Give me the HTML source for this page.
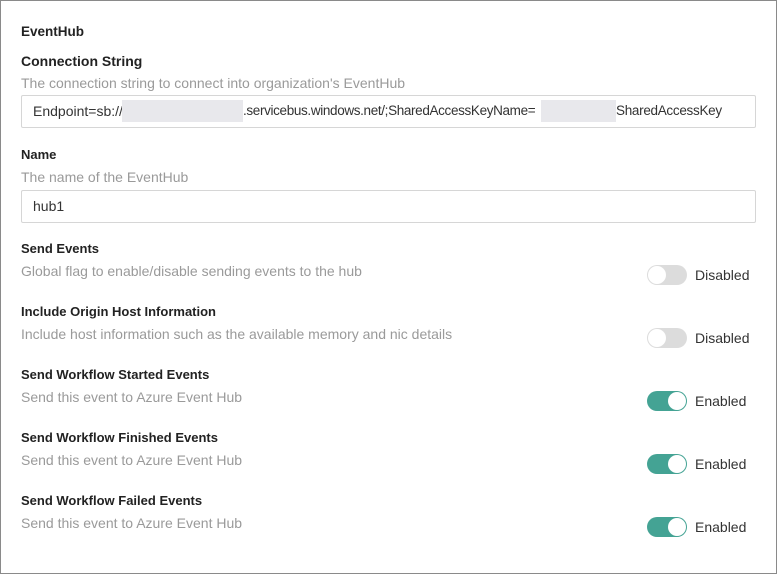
<!DOCTYPE html>
<html><head><style>
body{margin:0;width:777px;height:574px;overflow:hidden;background:#fff;font-family:"Liberation Sans",sans-serif;}
.frame{position:absolute;left:0;top:0;width:775px;height:572px;border:1px solid #8a8a8a;}
.a{position:absolute;white-space:nowrap;}
.h{font-weight:bold;font-size:13px;color:#222;}
.d{font-size:14px;color:#9a9a9a;}
.inp{position:absolute;left:21px;width:733px;height:31px;border:1px solid #d6d6d6;border-radius:2px;font-size:14px;color:#333;line-height:31px;box-sizing:content-box;}
.tg{position:absolute;left:647px;width:40px;height:20px;border-radius:10px;}
.tg.off{background:#dcdcdc;}
.tg.on{background:#44a394;}
.tg i{position:absolute;top:1px;width:18px;height:18px;border-radius:50%;background:#fff;}
.tg.off i{left:1px;}
.tg.on i{left:21px;}
.tl{position:absolute;left:695px;font-size:14px;color:#333;}
.red{position:absolute;background:#e8e8ec;height:22px;}
</style></head><body>
<div class="frame"></div>
<div class="a h" style="left:21px;top:24px;font-size:13.5px">EventHub</div>
<div class="a h" style="left:21px;top:53px;font-size:14px">Connection String</div>
<div class="a d" style="left:21px;top:75px">The connection string to connect into organization's EventHub</div>
<div class="inp" style="top:95px"><span style="margin-left:11px">Endpoint=sb://</span></div>
<div class="red" style="left:122px;top:100px;width:121px"></div>
<div class="red" style="left:541px;top:100px;width:75px"></div>
<div class="a" style="left:243px;top:103px;font-size:13.5px;color:#333;letter-spacing:-0.35px">.servicebus.windows.net/;SharedAccessKeyName=</div>
<div class="a" style="left:616px;top:103px;font-size:13.5px;color:#333;letter-spacing:-0.3px">SharedAccessKey</div>
<div class="a h" style="left:21px;top:147px">Name</div>
<div class="a d" style="left:21px;top:169px">The name of the EventHub</div>
<div class="inp" style="top:190px"><span style="margin-left:11px">hub1</span></div>

<div class="a h" style="left:21px;top:241px">Send Events</div>
<div class="a d" style="left:21px;top:263px">Global flag to enable/disable sending events to the hub</div>
<div class="tg off" style="top:265px"><i></i></div><div class="tl" style="top:267px">Disabled</div>

<div class="a h" style="left:21px;top:304px">Include Origin Host Information</div>
<div class="a d" style="left:21px;top:326px">Include host information such as the available memory and nic details</div>
<div class="tg off" style="top:328px"><i></i></div><div class="tl" style="top:330px">Disabled</div>

<div class="a h" style="left:21px;top:367px">Send Workflow Started Events</div>
<div class="a d" style="left:21px;top:389px">Send this event to Azure Event Hub</div>
<div class="tg on" style="top:391px"><i></i></div><div class="tl" style="top:393px">Enabled</div>

<div class="a h" style="left:21px;top:430px">Send Workflow Finished Events</div>
<div class="a d" style="left:21px;top:452px">Send this event to Azure Event Hub</div>
<div class="tg on" style="top:454px"><i></i></div><div class="tl" style="top:456px">Enabled</div>

<div class="a h" style="left:21px;top:493px">Send Workflow Failed Events</div>
<div class="a d" style="left:21px;top:515px">Send this event to Azure Event Hub</div>
<div class="tg on" style="top:517px"><i></i></div><div class="tl" style="top:519px">Enabled</div>
</body></html>
